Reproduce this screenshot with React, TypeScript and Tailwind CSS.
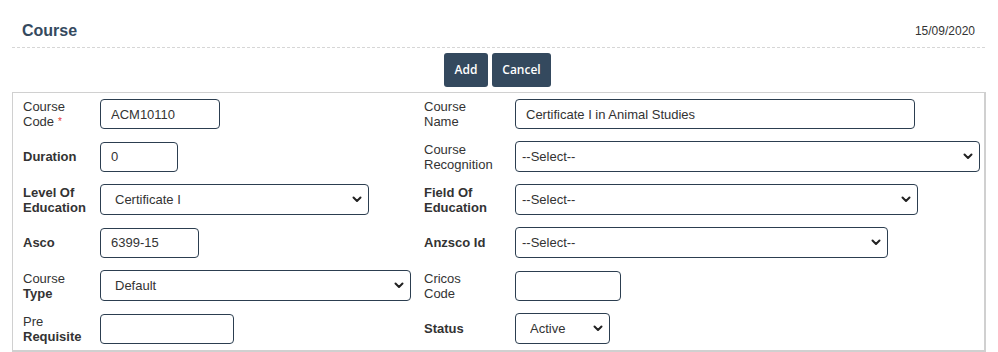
import React from "react";

type Line = { text: string; bold?: boolean };

function Label({ lines, width, required }: { lines: Line[]; width: string; required?: boolean }) {
  return (
    <div className={`${width} shrink-0 text-[13px] leading-[15px] text-[#333]`}>
      {lines.map((l, i) => (
        <div key={i} className={l.bold ? "font-bold" : "font-normal"}>
          {l.text}
          {required && i === lines.length - 1 && <span className="text-[#e53935] text-[10px] align-top ml-[4px]">*</span>}
        </div>
      ))}
    </div>
  );
}

function TextBox({ value, width }: { value: string; width: string }) {
  return (
    <input
      readOnly
      value={value}
      className={`${width} h-[30px] rounded-[4px] border border-[#2c3e50] bg-white pl-[10px] text-[13px] text-[#333] outline-none`}
    />
  );
}

function SelectBox({ value, width, pad }: { value: string; width: string; pad: string }) {
  return (
    <div className={`relative ${width} h-[31px]`}>
      <select
        value={value}
        onChange={() => {}}
        className={`h-full w-full appearance-none rounded-[4px] border border-[#2c3e50] bg-white ${pad} text-[13px] text-[#333] outline-none`}
      >
        <option>{value}</option>
      </select>
      {/* chevron */}
      <svg
        className="pointer-events-none absolute right-[7px] top-[12px]"
        width="10"
        height="7"
        viewBox="0 0 10 7"
        fill="none"
        stroke="#222"
        strokeWidth="2"
        strokeLinecap="round"
        strokeLinejoin="round"
      >
        <path d="M1.5 1.5l3.5 3.5 3.5-3.5" />
      </svg>
    </div>
  );
}

export default function App() {
  return (
    <div className="w-[998px] h-[352px] bg-white font-['Liberation_Sans',Arial,sans-serif] overflow-hidden">
      {/* Header */}
      <div className="mx-[12px] mr-[13px] h-[48px] pt-[14px] px-[10px] flex items-center justify-between border-b border-dashed border-[#d6d6d6]">
        <h1 className="text-[16px] font-bold text-[#34495e]">Course</h1>
        <span className="text-[12px] text-[#333]">15/09/2020</span>
      </div>

      {/* Actions */}
      <div className="mt-[5px] flex justify-center gap-[4px] pr-[3px]">
        <button className="h-[34px] w-[44px] rounded-[3px] bg-[#34495e] text-[12px] font-semibold text-white font-['Open_Sans',sans-serif]">
          Add
        </button>
        <button className="h-[34px] w-[59px] rounded-[3px] bg-[#34495e] text-[12px] font-semibold text-white font-['Open_Sans',sans-serif]">
          Cancel
        </button>
      </div>

      {/* Form */}
      <div className="mx-[12px] mt-[5px] h-[260px] border border-r-2 border-b-2 border-[#d0d0d0] pl-[10px]">
        <div className="flex h-[42px] items-center">
          <div className="flex w-[401px] items-center">
            <Label width="w-[77px]" lines={[{ text: "Course" }, { text: "Code" }]} required />
            <TextBox value="ACM10110" width="w-[120px]" />
          </div>
          <div className="flex items-center">
            <Label width="w-[91px]" lines={[{ text: "Course" }, { text: "Name" }]} />
            <TextBox value="Certificate I in Animal Studies" width="w-[400px]" />
          </div>
        </div>

        <div className="flex h-[43px] items-center">
          <div className="flex w-[401px] items-center">
            <Label width="w-[77px]" lines={[{ text: "Duration", bold: true }]} />
            <TextBox value="0" width="w-[78px]" />
          </div>
          <div className="flex items-center">
            <Label width="w-[91px]" lines={[{ text: "Course" }, { text: "Recognition" }]} />
            <SelectBox value="--Select--" width="w-[465px]" pad="pl-[6px]" />
          </div>
        </div>

        <div className="flex h-[43px] items-center">
          <div className="flex w-[401px] items-center">
            <Label width="w-[77px]" lines={[{ text: "Level Of", bold: true }, { text: "Education", bold: true }]} />
            <SelectBox value="Certificate I" width="w-[269px]" pad="pl-[14px]" />
          </div>
          <div className="flex items-center">
            <Label width="w-[91px]" lines={[{ text: "Field Of", bold: true }, { text: "Education", bold: true }]} />
            <SelectBox value="--Select--" width="w-[403px]" pad="pl-[6px]" />
          </div>
        </div>

        <div className="flex h-[43px] items-center">
          <div className="flex w-[401px] items-center">
            <Label width="w-[77px]" lines={[{ text: "Asco", bold: true }]} />
            <TextBox value="6399-15" width="w-[99px]" />
          </div>
          <div className="flex items-center">
            <Label width="w-[91px]" lines={[{ text: "Anzsco Id", bold: true }]} />
            <SelectBox value="--Select--" width="w-[373px]" pad="pl-[6px]" />
          </div>
        </div>

        <div className="flex h-[43px] items-center">
          <div className="flex w-[401px] items-center">
            <Label width="w-[77px]" lines={[{ text: "Course" }, { text: "Type", bold: true }]} />
            <SelectBox value="Default" width="w-[311px]" pad="pl-[14px]" />
          </div>
          <div className="flex items-center">
            <Label width="w-[91px]" lines={[{ text: "Cricos" }, { text: "Code" }]} />
            <TextBox value="" width="w-[106px]" />
          </div>
        </div>

        <div className="flex h-[43px] items-center">
          <div className="flex w-[401px] items-center">
            <Label width="w-[77px]" lines={[{ text: "Pre" }, { text: "Requisite", bold: true }]} />
            <TextBox value="" width="w-[134px]" />
          </div>
          <div className="flex items-center">
            <Label width="w-[91px]" lines={[{ text: "Status", bold: true }]} />
            <SelectBox value="Active" width="w-[95px]" pad="pl-[14px]" />
          </div>
        </div>
      </div>
    </div>
  );
}
